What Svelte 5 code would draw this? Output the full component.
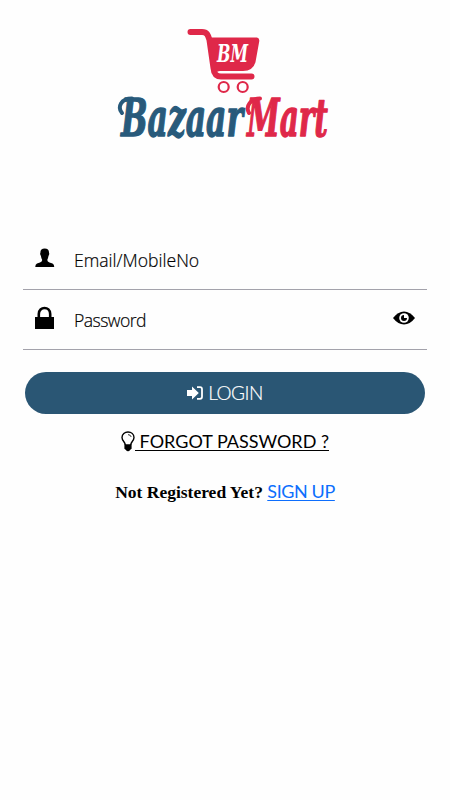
<script>
  let email = $state("");
  let password = $state("");
  let visible = $state(false);

  function login(e) {
    e.preventDefault();
  }
</script>

<main class="page">
  <svg class="logo" width="230" height="125" viewBox="0 0 230 125" role="img" aria-label="BazaarMart">
    <path class="handle" d="M80.500 12 H92 C97 12 98 15 99.500 20 L103.500 48 C104 54 106 56.500 111 56.500 H141.500" />
    <path class="basket" d="M98 17.500 H147 Q149.500 18 149.300 21 L145.500 42 Q143 51 133 51 H110 Q106 51 107 54 H102 Z" />
    <circle class="wheel" cx="113.700" cy="67" r="5" />
    <circle class="wheel" cx="132.700" cy="67" r="5" />
    <text class="initials" x="107" y="42" textLength="31" lengthAdjust="spacingAndGlyphs">BM</text>
    <path class="swash blue" d="M12 93 C7 87 11 78.500 22 78.500" />
    <text class="word blue" x="11" y="115.500" textLength="122" lengthAdjust="spacingAndGlyphs">Bazaar</text>
    <path class="swash red" d="M139 93 C135 86 141 78.500 150 78.500" />
    <text class="word red" x="137" y="115.500" textLength="81" lengthAdjust="spacingAndGlyphs">Mart</text>
  </svg>

  <form onsubmit={login}>
    <label class="field">
      <svg class="icon" width="20" height="20" viewBox="0 0 20 20">
        <path d="M9.700 .5 C12.700 .5 14.200 2.300 14 5 C14.500 5.400 14.300 7 13.500 7.700 C13.200 10 12.500 11 12.300 12 Q12.300 13.700 14.500 14.400 L17.500 15.500 Q19.300 16.300 19.200 19 H.3 Q.2 16.300 2 15.500 L5 14.400 Q7.200 13.700 7.200 12 C6.900 11 6.200 10 5.900 7.700 C5.100 7 4.900 5.400 5.400 5 C5.200 2.300 6.700 .5 9.700 .5 Z" />
      </svg>
      <input type="text" bind:value={email} placeholder="Email/MobileNo" />
    </label>
    <label class="field">
      <svg class="icon" width="20" height="24" viewBox="0 0 20 24">
        <path d="M0 11 H19 V23 H0 Z" />
        <path class="shackle" d="M3.800 12 V8 C3.800 0 15.200 0 15.200 8 V12" />
      </svg>
      <input class="secret" type={visible ? "text" : "password"} bind:value={password} placeholder="Password" />
      <button type="button" class="eye" aria-label="Show password" onclick={() => (visible = !visible)}>
        <svg width="22" height="14" viewBox="0 0 22 14">
          <path d="M0 7 Q5 .5 11 .5 T22 7 Q17 13.500 11 13.500 T0 7 Z" />
          <circle cx="11" cy="7" r="4.800" fill="#fff" />
          <path d="M11 4 V7 H14 A3 3 0 1 1 11 4 Z" />
        </svg>
      </button>
    </label>

    <button class="login">
      <svg width="16" height="14" viewBox="0 0 16 14">
        <path fill="#fff" d="M0 3.900 H5 V.5 L11.800 7 L5 13.500 V10.100 H0 Z" />
        <path class="door" d="M10 1.200 H13 Q15 1.200 15 3.200 V10.800 Q15 12.800 13 12.800 H10" />
      </svg>
      <span>LOGIN</span>
    </button>
  </form>

  <a class="forgot" href="#forgot">
    <svg width="14" height="21" viewBox="0 0 14 21">
      <path class="bulb" d="M4.300 14 C4.300 11 1 10 1 6.600 C1 3 3.800 1 7 1 S13 3 13 6.600 C13 10 9.700 11 9.700 14" />
      <path class="shine" d="M7 3.600 Q9.700 3.700 10.200 6" />
      <path d="M3.400 13.300 H10.600 V17.800 L9 19 Q8.500 20.300 7 20.300 T5 19 L3.400 17.800 Z" />
    </svg>
    <span>&nbsp;FORGOT PASSWORD ?</span>
  </a>

  <p class="register">
    <span>Not Registered Yet?</span>
    <a href="#signup">SIGN UP</a>
  </p>
</main>

<style>
  :global(body) { background: #fefefe; }
  .page {
    box-sizing: border-box;
    width: 450px;
    height: 800px;
    padding: 20px 23px 0;
    overflow: hidden;
    display: flex;
    flex-direction: column;
    align-items: center;
    font-family: Lato, "Liberation Sans", sans-serif;
    color: #000;
  }
  .logo { display: block; margin-bottom: 85px; flex: none; overflow: visible; }
  .handle {
    fill: none;
    stroke: #df2849;
    stroke-width: 6;
    stroke-linecap: round;
    stroke-linejoin: round;
  }
  .basket { fill: #df2849; }
  .wheel { fill: none; stroke: #df2849; stroke-width: 2.2; }
  .initials {
    font: italic bold 24px "DejaVu Serif Condensed", "DejaVu Serif", serif;
    fill: #fff;
  }
  .word {
    font: italic bold 53px "DejaVu Serif Condensed", "DejaVu Serif", serif;
    stroke-width: 1.3;
    stroke-linejoin: round;
  }
  .blue { fill: #285a7b; stroke: #285a7b; }
  .red { fill: #df2849; stroke: #df2849; }
  .swash { fill: none; stroke-width: 4; stroke-linecap: round; }
  form { width: 100%; }
  .field {
    box-sizing: border-box;
    display: flex;
    align-items: center;
    height: 60px;
    padding: 0 12px;
    border-bottom: 1px solid #a3a2ab;
  }
  .icon { flex: none; margin-bottom: 4px; }
  .shackle { fill: none; stroke: #000; stroke-width: 2.6; }
  input {
    flex: 1;
    min-width: 0;
    padding: 0;
    margin-left: 19px;
    border: none;
    outline: none;
    background: transparent;
    font: 300 17.6px "Open Sans", "Noto Sans", sans-serif;
    color: #000;
  }
  input::placeholder {
    color: #000;
    opacity: 1;
    -webkit-text-stroke: 0.2px #000;
  }
  .secret { letter-spacing: -0.55px; }
  button { border: none; padding: 0; cursor: pointer; }
  .eye { display: flex; background: transparent; margin-bottom: 4px; }
  .login {
    display: flex;
    align-items: center;
    justify-content: center;
    gap: 5px;
    width: 400px;
    height: 42px;
    margin: 21.5px auto 0;
    border-radius: 21px;
    background: #2a5674;
    color: #fff;
    font: 300 19px Lato, sans-serif;
    letter-spacing: -0.5px;
    -webkit-text-stroke: 0.2px #fff;
  }
  .door { fill: none; stroke: #fff; stroke-width: 1.8; }
  .forgot {
    display: flex;
    align-items: center;
    margin-top: 17.5px;
    color: #000;
    font-size: 18px;
    line-height: 22px;
    text-decoration: none;
  }
  .forgot span {
    margin-top: -2px;
    text-decoration: underline;
    text-decoration-thickness: 1px;
    text-underline-offset: 2px;
  }
  .bulb { fill: none; stroke: #000; stroke-width: 1.4; }
  .shine { fill: none; stroke: #000; stroke-width: 0.8; }
  .register {
    margin: 28px 0 0;
    font: bold 17.5px/22px "Liberation Serif", serif;
    white-space: nowrap;
  }
  .register a {
    color: #0d6efd;
    font: 18px Lato, sans-serif;
    letter-spacing: -0.4px;
    text-decoration-thickness: 1px;
    text-underline-offset: 2px;
  }
</style>
